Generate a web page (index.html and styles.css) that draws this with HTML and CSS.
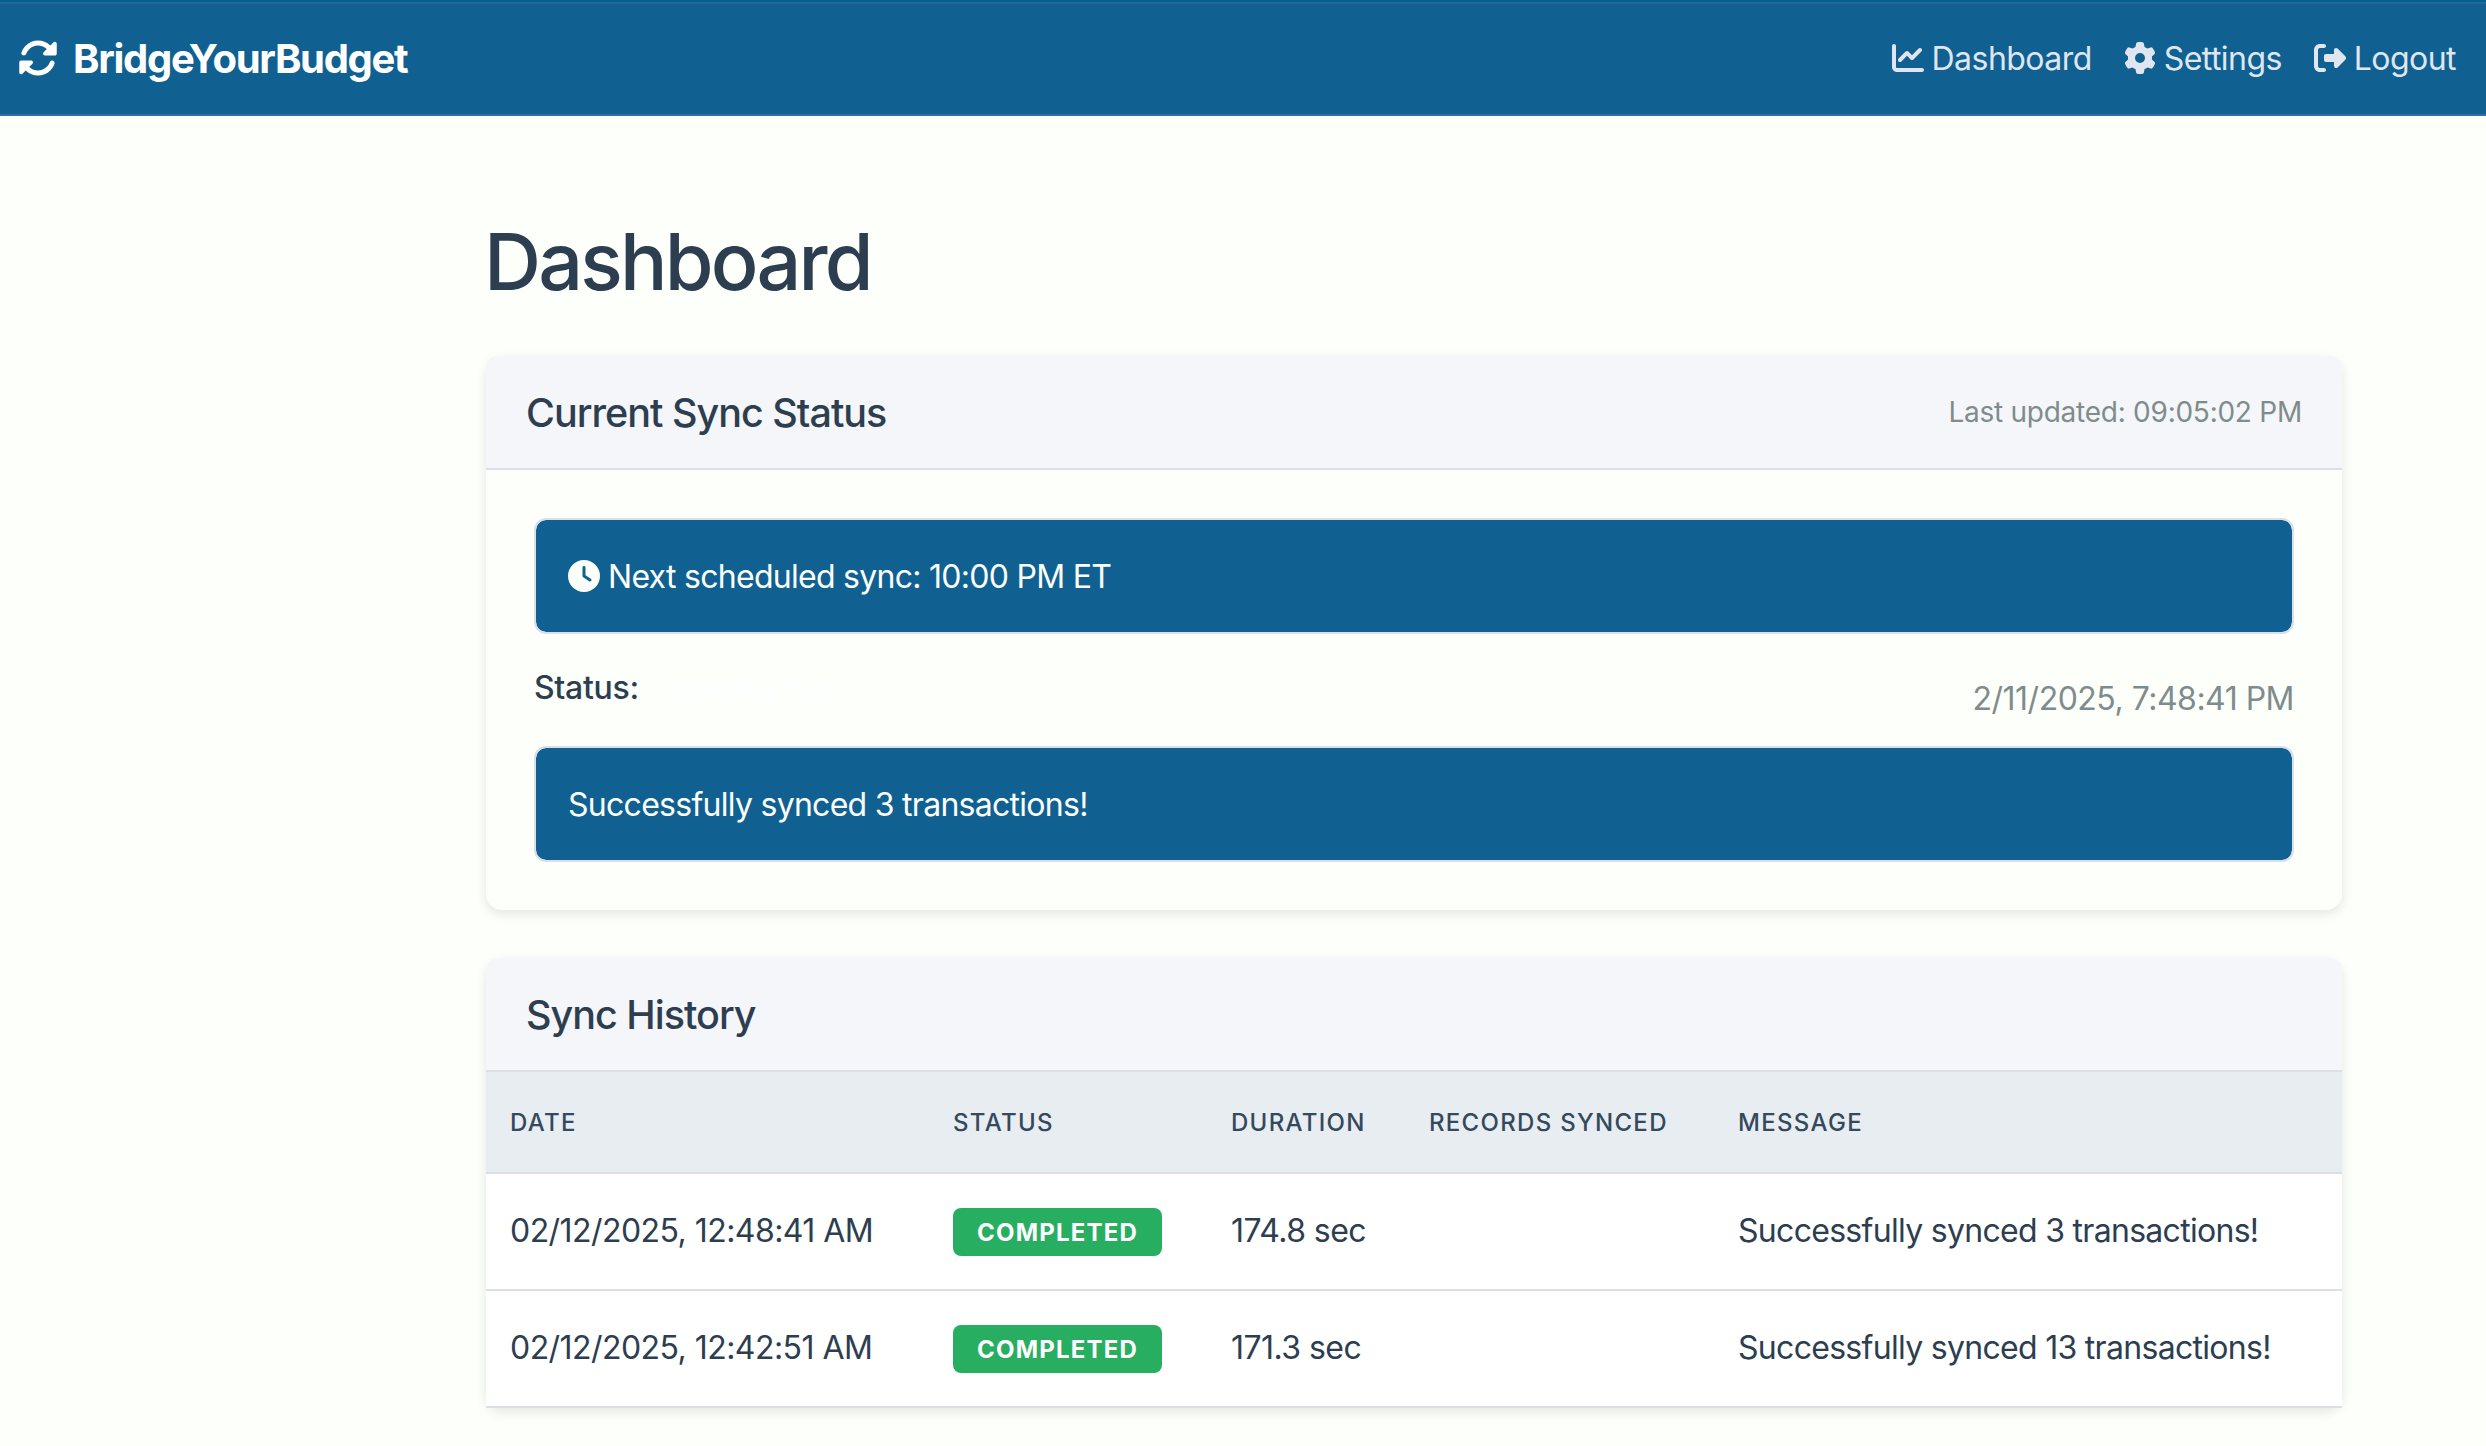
FILE: index.html
```html
<!DOCTYPE html>
<html lang="en">
<head>
<meta charset="UTF-8" />
<meta name="viewport" content="width=device-width, initial-scale=1" />
<title>Dashboard - BridgeYourBudget</title>
<link rel="stylesheet" href="styles.css">
</head>
<body>

<nav class="navbar">
  <a class="navbar-brand" href="#">
    <svg class="icon" viewBox="0 0 512 512"><path d="M142.9 142.9c62.2-62.2 162.7-62.5 225.3-1L327 183c-6.9 6.9-8.9 17.2-5.2 26.2s12.5 14.8 22.2 14.8H472c13.3 0 24-10.7 24-24V72c0-9.7-5.8-18.5-14.8-22.2s-19.3-1.7-26.2 5.2L413.4 96.6c-87.6-86.5-228.7-86.2-315.8 1C73.2 122 55.6 150.7 44.8 181.4c-5.9 16.7 2.9 34.9 19.5 40.8s34.9-2.9 40.8-19.5c7.7-21.8 20.2-42.3 37.8-59.8zM16 312V440c0 9.7 5.8 18.5 14.8 22.2s19.3 1.7 26.2-5.2l41.6-41.6c87.6 86.5 228.7 86.2 315.8-1c24.4-24.4 42.1-53.1 52.9-83.7c5.9-16.7-2.9-34.9-19.5-40.8s-34.9 2.9-40.8 19.5c-7.7 21.8-20.2 42.3-37.8 59.8c-62.2 62.2-162.7 62.5-225.3 1L185 329c6.9-6.9 8.9-17.2 5.2-26.2s-12.5-14.8-22.2-14.8H40c-13.3 0-24 10.7-24 24z"/></svg>
    <span>BridgeYourBudget</span>
  </a>
  <div class="navbar-links">
    <a class="nav-link" href="#">
      <svg class="icon" viewBox="0 0 512 512"><path d="M64 64c0-17.7-14.3-32-32-32S0 46.3 0 64V400c0 44.2 35.8 80 80 80H480c17.7 0 32-14.3 32-32s-14.3-32-32-32H80c-8.8 0-16-7.2-16-16V64zm406.6 86.6c12.5-12.5 12.5-32.8 0-45.3s-32.8-12.5-45.3 0L320 210.7l-57.4-57.4c-12.5-12.5-32.8-12.5-45.3 0l-112 112c-12.5 12.5-12.5 32.8 0 45.3s32.8 12.5 45.3 0L240 221.3l57.4 57.4c12.5 12.5 32.8 12.5 45.3 0l128-128z"/></svg>
      <span>Dashboard</span>
    </a>
    <a class="nav-link" href="#">
      <svg class="icon" viewBox="0 0 512 512"><path d="M495.9 166.6c3.2 8.7 .5 18.4-6.4 24.6l-43.3 39.4c1.1 8.3 1.7 16.8 1.7 25.4s-.6 17.1-1.7 25.4l43.3 39.4c6.9 6.2 9.6 15.9 6.4 24.6c-4.4 11.9-9.7 23.3-15.8 34.3l-4.7 8.1c-6.6 11-14 21.4-22.1 31.2c-5.9 7.2-15.7 9.6-24.5 6.8l-55.7-17.7c-13.4 10.3-28.2 18.9-44 25.4l-12.5 57.1c-2 9.1-9 16.3-18.2 17.8c-13.8 2.3-28 3.5-42.5 3.5s-28.7-1.2-42.5-3.5c-9.2-1.5-16.2-8.7-18.2-17.8l-12.5-57.1c-15.8-6.5-30.6-15.1-44-25.4L83.1 425.9c-8.8 2.8-18.6 .3-24.5-6.8c-8.1-9.8-15.5-20.2-22.1-31.2l-4.7-8.1c-6.1-11-11.4-22.4-15.8-34.3c-3.2-8.7-.5-18.4 6.4-24.6l43.3-39.4C64.6 273.1 64 264.6 64 256s.6-17.1 1.7-25.4L22.4 191.2c-6.9-6.2-9.6-15.9-6.4-24.6c4.4-11.9 9.7-23.3 15.8-34.3l4.7-8.1c6.6-11 14-21.4 22.1-31.2c5.9-7.2 15.7-9.6 24.5-6.8l55.7 17.7c13.4-10.3 28.2-18.9 44-25.4l12.5-57.1c2-9.1 9-16.3 18.2-17.8C227.3 1.2 241.5 0 256 0s28.7 1.2 42.5 3.5c9.2 1.5 16.2 8.7 18.2 17.8l12.5 57.1c15.8 6.5 30.6 15.1 44 25.4l55.7-17.7c8.8-2.8 18.6-.3 24.5 6.8c8.1 9.8 15.5 20.2 22.1 31.2l4.7 8.1c6.1 11 11.4 22.4 15.8 34.3zM256 336a80 80 0 1 0 0-160 80 80 0 1 0 0 160z"/></svg>
      <span>Settings</span>
    </a>
    <a class="nav-link" href="#">
      <svg class="icon" viewBox="0 0 512 512"><path d="M377.9 105.9L500.7 228.7c7.2 7.2 11.3 17.1 11.3 27.3s-4.1 20.1-11.3 27.3L377.9 406.1c-6.4 6.4-15 9.9-24 9.9c-18.7 0-33.9-15.2-33.9-33.9l0-62.1-128 0c-17.7 0-32-14.3-32-32l0-64c0-17.7 14.3-32 32-32l128 0 0-62.1c0-18.7 15.2-33.9 33.9-33.9c9 0 17.6 3.6 24 9.9zM160 96L96 96c-17.7 0-32 14.3-32 32l0 256c0 17.7 14.3 32 32 32l64 0c17.7 0 32 14.3 32 32s-14.3 32-32 32l-64 0c-53 0-96-43-96-96L0 128C0 75 43 32 96 32l64 0c17.7 0 32 14.3 32 32s-14.3 32-32 32z"/></svg>
      <span>Logout</span>
    </a>
  </div>
</nav>

<main class="container">
  <h1>Dashboard</h1>

  <section class="card">
    <div class="card-header">
      <h2>Current Sync Status</h2>
      <span class="last-updated">Last updated: 09:05:02 PM</span>
    </div>
    <div class="card-body">
      <div class="alert">
        <svg class="icon" viewBox="0 0 512 512"><path d="M256 0a256 256 0 1 1 0 512A256 256 0 1 1 256 0zM232 120V256c0 8 4 15.5 10.7 20l96 64c11 7.4 25.9 4.4 33.3-6.7s4.4-25.9-6.7-33.3L280 243.2V120c0-13.3-10.7-24-24-24s-24 10.7-24 24z"/></svg>
        <span>Next scheduled sync: 10:00 PM ET</span>
      </div>
      <div class="status-row">
        <div class="status"><strong>Status:</strong> <span class="badge">COMPLETED</span></div>
        <span class="timestamp">2/11/2025, 7:48:41 PM</span>
      </div>
      <div class="alert"><span>Successfully synced 3 transactions!</span></div>
    </div>
  </section>

  <section class="card">
    <div class="card-header">
      <h2>Sync History</h2>
    </div>
    <table class="history">
      <colgroup>
        <col class="col-date"><col class="col-status"><col class="col-duration"><col class="col-records"><col>
      </colgroup>
      <thead>
        <tr>
          <th>Date</th>
          <th>Status</th>
          <th>Duration</th>
          <th>Records Synced</th>
          <th>Message</th>
        </tr>
      </thead>
      <tbody>
        <tr>
          <td>02/12/2025, 12:48:41 AM</td>
          <td><span class="badge badge-success">COMPLETED</span></td>
          <td>174.8 sec</td>
          <td></td>
          <td class="message">Successfully synced 3 transactions!</td>
        </tr>
        <tr>
          <td>02/12/2025, 12:42:51 AM</td>
          <td><span class="badge badge-success">COMPLETED</span></td>
          <td>171.3 sec</td>
          <td></td>
          <td class="message">Successfully synced 13 transactions!</td>
        </tr>
      </tbody>
    </table>
  </section>
</main>

</body>
</html>
```

FILE: styles.css
```css
* {
  box-sizing: border-box;
}
body {
  margin: 0;
  font-family: Inter, "Liberation Sans", sans-serif;
  font-size: 32px;
  line-height: 48px;
  letter-spacing: -0.55px;
  color: #2c3e50;
  background: #fdfffa;
}
.icon {
  width: 1em;
  height: 1em;
  fill: currentColor;
  flex: none;
}
.navbar {
  display: flex;
  justify-content: space-between;
  align-items: center;
  height: 116px;
  padding: 4px 30px 2px 18px;
  background: #106192;
  border-bottom: 2px solid #2f6f9f;
  box-shadow: inset 0 2px #04608f, inset 0 4px #22699a;
}
.navbar-brand {
  display: flex;
  align-items: center;
  gap: 15px;
  color: #fff;
  font-size: 40px;
  font-weight: 700;
  letter-spacing: -1.3px;
  text-decoration: none;
}
.navbar-brand span, .nav-link span {
  padding-top: 2px;
}
.navbar-links {
  display: flex;
  gap: 32px;
}
.nav-link {
  display: flex;
  align-items: center;
  gap: 8px;
  color: #dfe6ef;
  text-decoration: none;
}
.container {
  width: 1856px;
  margin-left: 486px;
  padding-top: 97px;
}
h1 {
  margin: 0 0 47px -2px;
  font-size: 79px;
  line-height: 96px;
  font-weight: 500;
  letter-spacing: -2.8px;
}
.card {
  margin-bottom: 48px;
  border-radius: 16px;
  box-shadow: 0 4px 12px rgba(0, 0, 0, 0.1);
}
.card-header {
  display: flex;
  justify-content: space-between;
  align-items: center;
  height: 114px;
  padding: 0 40px;
  background: #f5f6f9;
  border-bottom: 2px solid #dcdfe6;
  border-radius: 12px 12px 0 0;
}
h2 {
  margin: 0;
  padding-top: 2px;
  font-size: 39.5px;
  font-weight: 500;
  letter-spacing: -1px;
}
.last-updated {
  font-size: 28px;
  letter-spacing: -0.25px;
  color: #7f8c8d;
}
.card-body {
  padding: 48px;
}
.alert {
  display: flex;
  align-items: center;
  gap: 8px;
  height: 116px;
  padding: 0 32px;
  letter-spacing: -0.72px;
  color: #fdfffa;
  background: #106192;
  background-clip: padding-box;
  border: 2px solid #dbe0e8;
  border-radius: 12px;
}
.alert span {
  padding-top: 2px;
}
.status-row {
  display: flex;
  justify-content: space-between;
  height: 112px;
}
.status {
  padding-top: 30px;
}
.status strong {
  font-weight: 500;
  letter-spacing: -0.3px;
}
.timestamp {
  padding-top: 41px;
  letter-spacing: -0.5px;
  color: #7f8c8d;
}
.badge {
  display: inline-block;
  height: 48px;
  padding: 1px 24px 0;
  font-size: 24px;
  line-height: 47px;
  font-weight: 700;
  letter-spacing: 1.2px;
  color: #fff;
  border-radius: 8px;
}
.badge-success {
  background: #27ae60;
}
.history {
  width: 100%;
  table-layout: fixed;
  border-spacing: 0;
  background: #fff;
}
.col-date {
  width: 443px;
}
.col-status {
  width: 278px;
}
.col-duration {
  width: 198px;
}
.col-records {
  width: 309px;
}
.history th {
  height: 102px;
  padding: 2px 24px 0;
  text-align: left;
  text-transform: uppercase;
  font-size: 24px;
  font-weight: 500;
  letter-spacing: 1.3px;
  color: #34495e;
  background: #e8edf1;
  border-bottom: 2px solid #dcdfe6;
}
.history td {
  height: 117px;
  padding: 0 24px 1px;
  white-space: nowrap;
  border-bottom: 2px solid #dcdfe6;
}
.history .message {
  letter-spacing: -0.7px;
}
```
